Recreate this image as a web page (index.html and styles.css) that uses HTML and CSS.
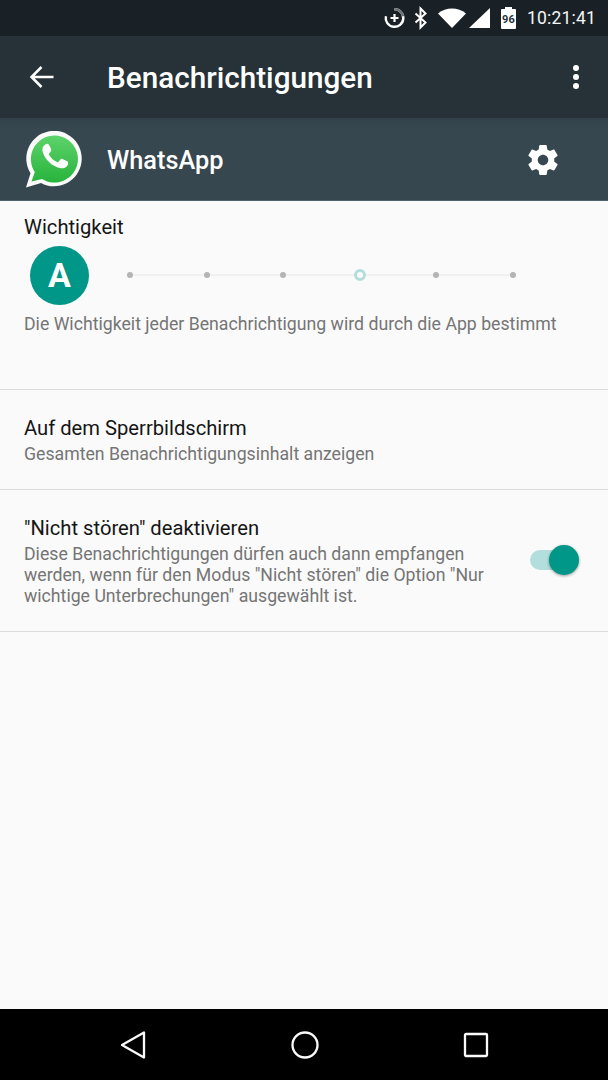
FILE: index.html
```html
<!DOCTYPE html>
<html lang="de">
<head>
  <meta charset="UTF-8">
  <title>Benachrichtigungen</title>
  <link rel="stylesheet" href="styles.css">
</head>
<body>
<div class="screen">
  <div class="statusbar">
    <svg class="st-icon" width="24" height="24" viewBox="0 0 24 24"><path d="M12.5 3.2a8.8 8.8 0 1 1-8.6 7" fill="none" stroke="#fff" stroke-width="2.4"/><path d="M12.5 3.2a8.8 8.8 0 0 1 8.6 7" fill="none" stroke="#6b7073" stroke-width="2.4"/><path d="M12.5 8v8M8.5 12h8" stroke="#fff" stroke-width="2.2"/></svg>
    <svg class="st-icon st-bt" width="14" height="24" viewBox="0 0 14 24"><path d="M1.5 7.5l10 9-5 5V2.500l5 5-10 9" fill="none" stroke="#fff" stroke-width="2"/></svg>
    <svg class="st-icon st-wifi" width="28" height="20" viewBox="0 0 28 20"><path d="M0 5.500C4 2 9 .5 14 .5s10 1.500 14 5L14 20z" fill="#fff"/></svg>
    <svg class="st-icon st-signal" width="21" height="20" viewBox="0 0 21 20"><path d="M21 0v20H0z" fill="#fff"/></svg>
    <div class="battery"><span class="battery-cap"></span><span class="battery-num">96</span></div>
    <span class="clock">10:21:41</span>
  </div>

  <div class="toolbar">
    <svg class="back" width="26" height="26" viewBox="0 0 26 26"><path d="M24.500 13H3M12.500 3L2.500 13l10 10" fill="none" stroke="#fff" stroke-width="2.500"/></svg>
    <h1 class="title">Benachrichtigungen</h1>
    <div class="more"><i></i><i></i><i></i></div>
  </div>

  <div class="appbar">
    <svg class="wa" width="58" height="58" viewBox="0 0 58 58">
      <defs><linearGradient id="wagreen" x1="0" y1="0" x2="0" y2="1"><stop offset="0" stop-color="#5ed36b"/><stop offset="1" stop-color="#27b33c"/></linearGradient></defs>
      <path d="M1 56.500l4.500-14.300A27.700 27.700 0 1 1 16 52z" fill="#fafafa"/>
      <path d="M6.500 50.500l3.300-9.500A23.500 23.500 0 1 1 17 48z" fill="url(#wagreen)"/>
      <path d="M20.500 13.500c1-.9 2.700-1 3.400.2l2.200 4.400c.4.900.2 1.700-.4 2.400l-1.500 1.800c-.4.500-.4 1 0 1.600 2 3.300 4.500 5.600 7.800 7.200.6.300 1.100.2 1.500-.3l1.900-2.300c.6-.7 1.300-.8 2.100-.5l4.700 2.300c1 .5 1.100 1.300.9 2.400-.6 3.200-4 5-7.200 4.500-8.700-1.500-16.100-8.700-18.100-16.200-1-3.500.2-6.300 2.700-7.500z" fill="#fff"/>
    </svg>
    <span class="app-name">WhatsApp</span>
    <svg class="gear" width="36" height="36" viewBox="0 0 24 24"><path d="M19.430 12.980c.04-.32.07-.64.07-.98s-.03-.66-.07-.98l2.110-1.650c.19-.15.24-.42.12-.64l-2-3.460c-.12-.22-.39-.3-.61-.22l-2.490 1c-.52-.4-1.080-.73-1.690-.98l-.38-2.650C14.460 2.180 14.250 2 14 2h-4c-.25 0-.46.18-.49.420l-.38 2.650c-.61.25-1.170.59-1.690.98l-2.490-1c-.23-.09-.49 0-.61.220l-2 3.460c-.13.220-.07.490.12.640l2.110 1.650c-.04.320-.07.650-.07.980s.03.660.07.980l-2.110 1.650c-.19.150-.24.420-.12.640l2 3.460c.12.220.39.300.61.220l2.490-1c.52.400 1.080.730 1.690.980l.38 2.650c.03.240.24.420.49.420h4c.25 0 .46-.18.49-.42l.38-2.650c.61-.25 1.170-.59 1.690-.98l2.490 1c.23.090.49 0 .61-.22l2-3.460c.12-.22.07-.49-.12-.64l-2.110-1.650zM12 15.500c-1.930 0-3.500-1.570-3.500-3.500s1.570-3.500 3.500-3.500 3.500 1.570 3.500 3.500-1.570 3.500-3.500 3.500z" fill="#fff"/></svg>
  </div>

  <div class="content">
    <section class="row row-imp">
      <div class="row-title">Wichtigkeit</div>
      <div class="imp-ctl">
        <div class="badge">A</div>
        <div class="slider">
          <i class="dot"></i><i class="dot"></i><i class="dot"></i><i class="dot dot-on"></i><i class="dot"></i><i class="dot"></i>
        </div>
      </div>
      <p class="row-sub">Die Wichtigkeit jeder Benachrichtigung wird durch die App bestimmt</p>
    </section>

    <section class="row row-lock">
      <div class="row-title">Auf dem Sperrbildschirm</div>
      <p class="row-sub">Gesamten Benachrichtigungsinhalt anzeigen</p>
    </section>

    <section class="row row-dnd">
      <div class="row-text">
        <div class="row-title">"Nicht stören" deaktivieren</div>
        <p class="row-sub">Diese Benachrichtigungen dürfen auch dann empfangen werden, wenn für den Modus "Nicht stören" die Option "Nur wichtige Unterbrechungen" ausgewählt ist.</p>
      </div>
      <div class="switch"><span class="thumb"></span></div>
    </section>
  </div>

  <div class="navbar">
    <svg width="26" height="30" viewBox="0 0 26 30"><path d="M24 2.500v25L2 15z" fill="none" stroke="#fafafa" stroke-width="2.300" stroke-linejoin="round"/></svg>
    <svg width="30" height="30" viewBox="0 0 30 30"><circle cx="15" cy="15" r="12.500" fill="none" stroke="#fafafa" stroke-width="2.300"/></svg>
    <svg width="26" height="26" viewBox="0 0 26 26"><rect x="2" y="2" width="22" height="22" rx="1" fill="none" stroke="#fafafa" stroke-width="2.300"/></svg>
  </div>
</div>
</body>
</html>
```

FILE: styles.css
```css
*{margin:0;padding:0;box-sizing:border-box;}
body{background:#fafafa;font-family:Roboto,"Liberation Sans",sans-serif;}
.screen{width:608px;height:1080px;display:flex;flex-direction:column;overflow:hidden;}

.statusbar{height:36px;background:#192126;display:flex;align-items:center;justify-content:flex-end;padding:0 12px 0 0;color:#fff;}
.st-icon{display:block;flex:none;}
.st-bt{margin-left:8px;}
.st-wifi{margin-left:10px;}
.st-signal{margin-left:3px;}
.battery{position:relative;width:15px;height:20px;margin-left:11px;background:#fff;border-radius:1px;margin-top:2px;}
.battery-cap{position:absolute;top:-2px;left:4px;width:7px;height:2px;background:#fff;}
.battery-num{display:block;font-size:11px;font-weight:700;color:#263238;text-align:center;line-height:21px;}
.clock{font-size:17.500px;font-weight:400;margin-left:11px;letter-spacing:.2px;color:#f4f5f5;}

.toolbar{height:82px;background:#263238;display:flex;align-items:center;padding:0 0 0 29px;}
.back{display:block;flex:none;margin-top:-1px;}
.title{font-size:29.700px;font-weight:500;color:#fff;margin-left:52px;flex:1;}
.more{display:flex;flex-direction:column;gap:3px;margin-right:29px;margin-top:-1px;}
.more i{display:block;width:6px;height:6px;border-radius:50%;background:#fff;}

.appbar{height:83px;background:#37474f;display:flex;align-items:center;padding:0 47px 0 24px;box-shadow:inset 0 10px 8px -8px rgba(0,0,0,.12);border-bottom:1px solid #546269;}
.wa{display:block;flex:none;margin-left:1px;margin-top:2px;}
.app-name{font-size:25.300px;font-weight:500;color:#fff;margin-left:24px;flex:1;margin-top:2px;}
.gear{display:block;flex:none;margin-top:1px;}

.content{flex:1;background:#fafafa;}
.row{padding:0 24px;border-bottom:1px solid #dcdcdc;}
.row-title{font-size:20.200px;line-height:26px;color:#151515;}
.row-sub{font-size:17.700px;line-height:21px;color:#757575;}
.row-imp{height:189px;padding-top:13px;}
.imp-ctl{display:flex;align-items:center;margin-top:6px;padding-left:6px;}
.badge{width:59px;height:59px;border-radius:50%;background:#009688;color:#fff;font-size:34px;font-weight:700;text-align:center;line-height:58px;flex:none;}
.slider{flex:none;width:389px;margin-left:38px;display:flex;justify-content:space-between;align-items:center;height:6px;background:linear-gradient(#f0f0f0,#f0f0f0) center/100% 2px no-repeat;margin-top:-2px;}
.dot{display:block;width:6px;height:6px;border-radius:50%;background:#b4b4b4;}
.dot-on{width:12px;height:12px;background:#fafafa;border:3px solid #b2dfdb;margin:0 -3px;}
.row-imp .row-sub{margin-top:9px;}
.row-lock{height:100px;padding-top:25px;}
.row-lock .row-sub{margin-top:3px;}
.row-dnd{height:142px;padding-top:25px;display:flex;}
.row-text{width:466px;flex:none;}
.row-dnd .row-sub{margin-top:3px;}
.switch{position:relative;width:34px;height:20px;border-radius:10px;background:#b2dfdb;margin:35px 0 0 40px;flex:none;}
.thumb{position:absolute;top:-5px;right:-15px;width:30px;height:30px;border-radius:50%;background:#009688;box-shadow:0 1px 3px rgba(0,0,0,.4);}

.navbar{height:71px;background:#000;display:flex;align-items:center;justify-content:space-between;padding:0 119px 0 120px;}
.navbar svg{display:block;flex:none;}
```
